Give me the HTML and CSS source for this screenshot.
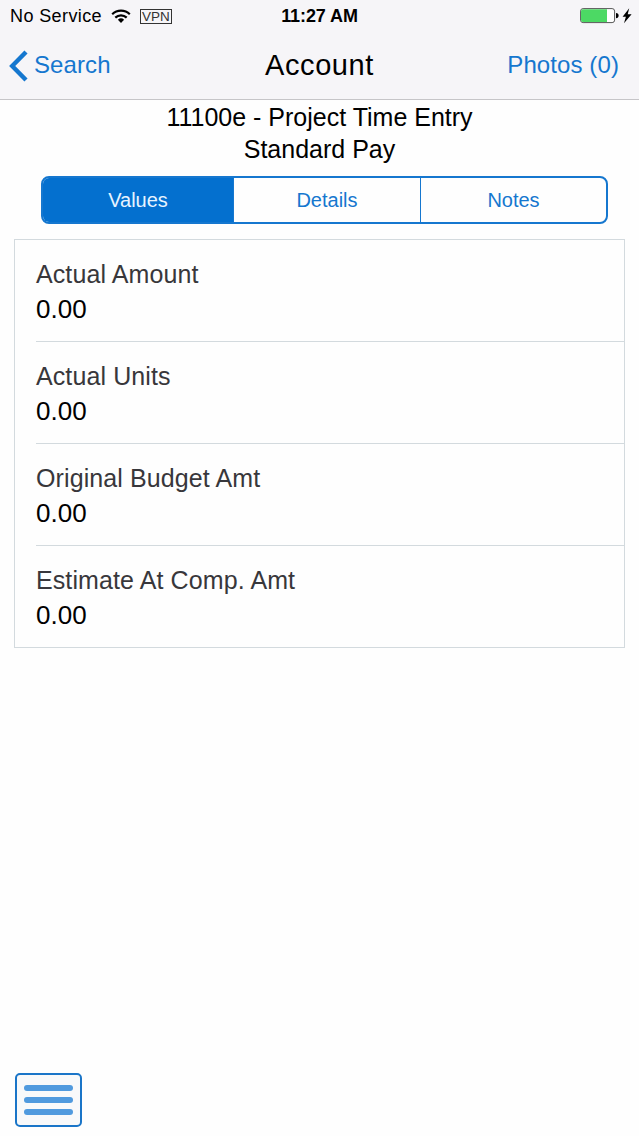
FILE: index.html
```html
<!DOCTYPE html>
<html lang="en">
  <head>
    <meta charset="utf-8" />
    <title>Account</title>
    <meta name="viewport" content="width=device-width, initial-scale=1.0" />
    <link rel="stylesheet" href="styles.css">
  </head>
  <body>
    <header class="top">
      <div class="status-bar">
        <div class="status-left">
          <span class="carrier">No Service</span>
          <svg class="wifi" width="20" height="15" viewBox="0 0 20 15">
            <g fill="none" stroke="#000" stroke-width="2.2">
              <path d="M1.2 5.200a12.600 12.600 0 0 1 17.600 0" />
              <path d="M4.300 8.600a8.200 8.200 0 0 1 11.400 0" />
            </g>
            <path d="M10 13.900l-3.100-3.100a4.500 4.500 0 0 1 6.200 0z" />
          </svg>
          <span class="vpn">VPN</span>
        </div>
        <span class="time">11:27 AM</span>
        <div class="status-right">
          <svg width="52" height="18" viewBox="0 0 52 18">
            <rect x="0.6" y="1.6" width="34" height="14" rx="2.5" fill="#fff" stroke="#555" />
            <path d="M3 2.200h24v12.800h-24a2 2 0 0 1-2-2v-8.800a2 2 0 0 1 2-2z" fill="#4cd964" />
            <path d="M36 6a2.600 2.600 0 0 1 0 5.200z" />
            <path d="M49.200 1.200L42.600 9.700h3.300l-1.900 6.500 7.600-9h-3.900z" />
          </svg>
        </div>
      </div>
      <nav class="nav-bar">
        <a class="back">
          <svg width="19" height="32" viewBox="0 0 19 32">
            <path d="M17 2L3.200 16 17 30" fill="none" stroke="#1577cf" stroke-width="4.400" />
          </svg>
          <span>Search</span>
        </a>
        <h1>Account</h1>
        <a class="photos">Photos (0)</a>
      </nav>
    </header>

    <main>
      <div class="subject">
        11100e - Project Time Entry<br />
        Standard Pay
      </div>

      <div class="tabs">
        <a class="tab selected">Values</a>
        <a class="tab">Details</a>
        <a class="tab">Notes</a>
      </div>

      <dl class="values">
        <div class="row">
          <dt>Actual Amount</dt>
          <dd>0.00</dd>
        </div>
        <div class="row">
          <dt>Actual Units</dt>
          <dd>0.00</dd>
        </div>
        <div class="row">
          <dt>Original Budget Amt</dt>
          <dd>0.00</dd>
        </div>
        <div class="row">
          <dt>Estimate At Comp. Amt</dt>
          <dd>0.00</dd>
        </div>
      </dl>
    </main>

    <footer>
      <div class="menu-button">
        <span></span>
        <span></span>
        <span></span>
      </div>
    </footer>
  </body>
</html>
```

FILE: styles.css
```css
:root {
  --blue: #0470cf;
  --link: #1577cf;
  --line: #d3dade;
}

* {
  box-sizing: border-box;
}

body {
  margin: 0;
  height: 100vh;
  display: flex;
  flex-direction: column;
  background: #fefefe;
  color: #000;
  font-family: "Liberation Sans", Arial, sans-serif;
}

.top {
  height: 100px;
  background: #f6f5f8;
  border-bottom: 1px solid #c6c5c8;
}

.status-bar {
  height: 32px;
  padding: 0 7px;
  display: grid;
  grid-template-columns: 1fr auto 1fr;
  align-items: center;
  font-size: 18px;
  line-height: 32px;
}

.status-left {
  padding-left: 3px;
  display: flex;
  align-items: center;
}

.carrier {
  width: 101px;
  letter-spacing: 0.4px;
}

.vpn {
  margin-left: 9px;
  width: 32px;
  height: 15px;
  border: 1px solid #333;
  color: #333;
  font-size: 13.5px;
  line-height: 14px;
  text-align: center;
}

.time {
  font-weight: bold;
  letter-spacing: -0.1px;
}

.status-right {
  display: flex;
  justify-content: flex-end;
}

.nav-bar {
  height: 67px;
  padding: 0 20px;
  display: grid;
  grid-template-columns: 1fr auto 1fr;
  align-items: center;
  font-size: 24px;
}

.back {
  margin-left: -11px;
  display: flex;
  align-items: center;
  gap: 6px;
  color: var(--link);
}

.back span,
.photos {
  position: relative;
  top: -1px;
  letter-spacing: 0.1px;
}

.photos {
  text-align: right;
  color: var(--link);
}

h1 {
  margin: 0;
  font-size: 29px;
  font-weight: normal;
  letter-spacing: 0.6px;
}

main {
  flex: 1 1 auto;
}

.subject {
  padding-top: 1px;
  font-size: 25px;
  line-height: 32px;
  text-align: center;
}

.tabs {
  margin: 11px 31px 0 41px;
  height: 48px;
  display: grid;
  grid-template-columns: 190px 187px 1fr;
  border: 2px solid var(--link);
  border-radius: 8px;
  overflow: hidden;
}

.tab {
  color: var(--link);
  font-size: 20px;
  line-height: 44px;
  text-align: center;
}

.tab + .tab {
  border-left: 1px solid var(--link);
}

.tab.selected {
  background: var(--blue);
  color: #e8f4ff;
}

.values {
  margin: 15px 14px 0;
  padding-left: 21px;
  border: 1px solid var(--line);
}

.row {
  height: 102px;
  padding-top: 16px;
}

.row:first-child {
  height: 101px;
}

.row + .row {
  border-top: 1px solid var(--line);
}

dt {
  color: #38373b;
  font-size: 25px;
  line-height: 36px;
  letter-spacing: 0.1px;
}

dd {
  margin: 0;
  font-size: 26px;
  line-height: 35px;
}

footer {
  padding: 0 15px 9px;
}

.menu-button {
  width: 67px;
  height: 54px;
  padding: 0 7px;
  display: flex;
  flex-direction: column;
  justify-content: center;
  gap: 6px;
  background: #f8f9fa;
  border: 2px solid #1a75c8;
  border-radius: 5px;
}

.menu-button span {
  height: 6px;
  border-radius: 3px;
  background: #509ade;
}
```
